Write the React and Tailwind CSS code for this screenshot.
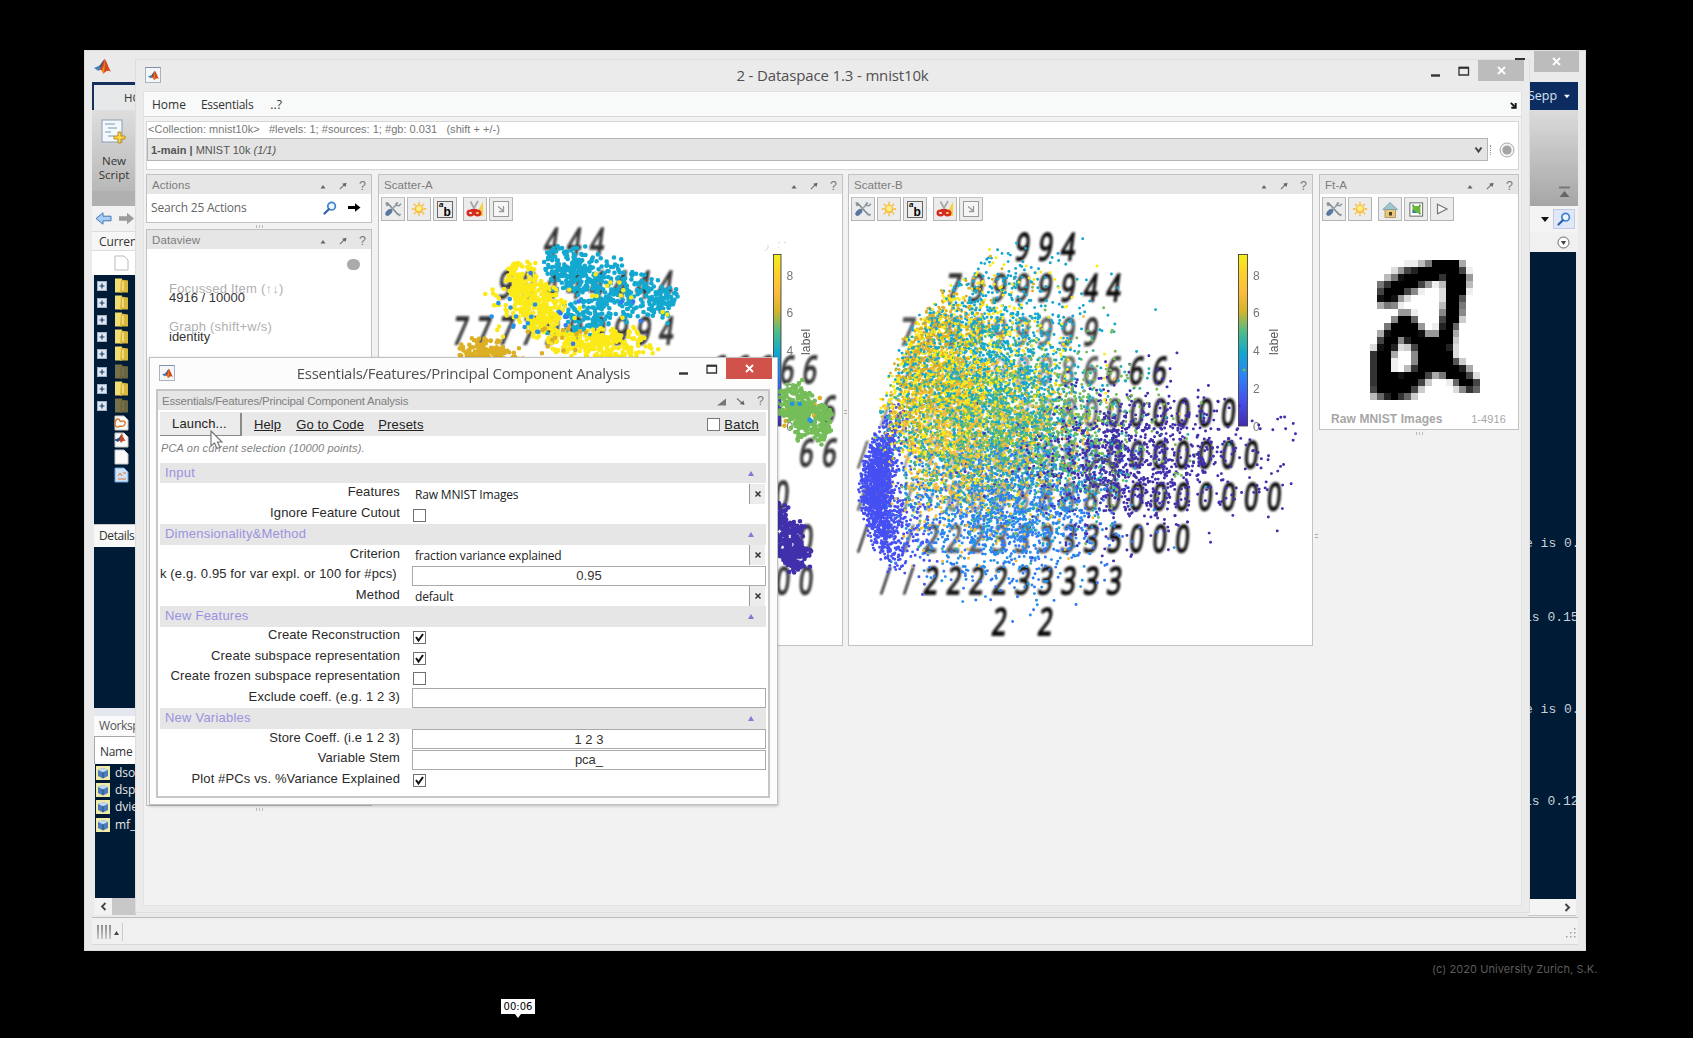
import React from "react";

const sans = "font-['Liberation_Sans',sans-serif]";
const ui = "font-['Open_Sans',sans-serif]";

/* ---------- seeded scatter data ---------- */
function makeRng(seed) {
  let a = seed;
  return () => {
    a = (a + 0x6d2b79f5) | 0;
    let t = Math.imul(a ^ (a >>> 15), 1 | a);
    t = (t + Math.imul(t ^ (t >>> 7), 61 | t)) ^ t;
    return ((t ^ (t >>> 14)) >>> 0) / 4294967296;
  };
}

const LABEL_COLORS = [
  "#4030ac", "#4650f2", "#3478f8", "#2492e8", "#12a8d0",
  "#30b0a8", "#74bd58", "#dcaf24", "#f3bd3c", "#fbea18",
];

const EDGE = [
  [230, 995], [262, 975], [270, 955], [290, 938], [310, 922], [340, 900],
  [370, 888], [400, 880], [430, 876], [450, 868], [470, 862], [500, 860],
  [540, 868], [560, 880], [575, 905], [590, 955], [640, 965],
];

function leftEdge(y) {
  for (let i = 1; i < EDGE.length; i++) {
    if (y <= EDGE[i][0]) {
      const [y0, x0] = EDGE[i - 1];
      const [y1, x1] = EDGE[i];
      return x0 + ((x1 - x0) * (y - y0)) / (y1 - y0);
    }
  }
  return 960;
}

const B_CLUSTERS = [
  { l: 0, n: 800, x: 1125, y: 458, sx: 52, sy: 32 },
  { l: 0, n: 350, x: 1160, y: 462, sx: 60, sy: 36 },
  { l: 2, n: 650, x: 1005, y: 515, sx: 52, sy: 38 },
  { l: 3, n: 850, x: 1000, y: 500, sx: 52, sy: 38 },
  { l: 5, n: 1100, x: 1000, y: 440, sx: 60, sy: 42 },
  { l: 6, n: 1250, x: 1010, y: 425, sx: 66, sy: 40 },
  { l: 8, n: 1300, x: 970, y: 440, sx: 52, sy: 44 },
  { l: 4, n: 1550, x: 978, y: 360, sx: 52, sy: 48 },
  { l: 7, n: 1150, x: 925, y: 352, sx: 34, sy: 44 },
  { l: 9, n: 1500, x: 950, y: 375, sx: 50, sy: 54 },
];

function scatterB() {
  const r = makeRng(7);
  const g = () => Math.sqrt(-2 * Math.log(r() + 1e-9)) * Math.cos(6.2832 * r());
  const pts = [];
  B_CLUSTERS.forEach((c) => {
    for (let i = 0; i < c.n; i++) {
      const x = c.x + g() * c.sx;
      const y = c.y + g() * c.sy;
      if (y < 232 || y > 634 || x > 1306 || x < leftEdge(y) + r() * 14) continue;
      if (y > 450 && y < 560 && x < 905 && r() < 0.6) continue;
      pts.push([x, y, c.l]);
    }
  });
  for (let i = 0; i < 1400; i++) {
    const y = 488 + g() * 33;
    const x = 876 + g() * 8.5 + Math.pow((y - 492) / 42, 2) * 6;
    if (y > 402 && y < 578 && x > leftEdge(y) - 2) pts.push([x, y, 1]);
  }
  for (let i = 0; i < 160; i++) pts.push([905 + g() * 16, 520 + g() * 30, 1]);
  for (let i = pts.length - 1; i > 0; i--) {
    const j = Math.floor(r() * (i + 1));
    [pts[i], pts[j]] = [pts[j], pts[i]];
  }
  return pts;
}

const A_BLOBS = [
  { l: 4, n: 85, x: 565, y: 263, rx: 23, ry: 17 },
  { l: 4, n: 75, x: 588, y: 274, rx: 22, ry: 22 },
  { l: 4, n: 65, x: 575, y: 280, rx: 26, ry: 13 },
  { l: 4, n: 75, x: 612, y: 284, rx: 25, ry: 20 },
  { l: 4, n: 100, x: 645, y: 300, rx: 30, ry: 24 },
  { l: 4, n: 40, x: 662, y: 301, rx: 15, ry: 12 },
  { l: 4, n: 80, x: 583, y: 313, rx: 24, ry: 15 },
  { l: 4, n: 40, x: 615, y: 306, rx: 24, ry: 18 },
  { l: 4, n: 16, x: 575, y: 330, rx: 30, ry: 8 },
  { l: 9, n: 100, x: 521, y: 282, rx: 18, ry: 20 },
  { l: 9, n: 160, x: 535, y: 302, rx: 25, ry: 20 },
  { l: 9, n: 95, x: 544, y: 323, rx: 16, ry: 14 },
  { l: 9, n: 115, x: 580, y: 343, rx: 28, ry: 13 },
  { l: 9, n: 175, x: 616, y: 345, rx: 32, ry: 17 },
  { l: 9, n: 32, x: 512, y: 306, rx: 24, ry: 30 },
  { l: 9, n: 18, x: 610, y: 300, rx: 60, ry: 38 },
  { l: 7, n: 70, x: 482, y: 348, rx: 22, ry: 10 },
  { l: 7, n: 60, x: 495, y: 355, rx: 28, ry: 8 },
  { l: 7, n: 16, x: 560, y: 340, rx: 40, ry: 16 },
  { l: 3, n: 14, x: 525, y: 315, rx: 34, ry: 25 },
  { l: 2, n: 9, x: 590, y: 300, rx: 80, ry: 46 },
  { l: 6, n: 130, x: 794, y: 402, rx: 19, ry: 18 },
  { l: 6, n: 155, x: 808, y: 418, rx: 20, ry: 18 },
  { l: 6, n: 60, x: 822, y: 425, rx: 9, ry: 16 },
  { l: 7, n: 8, x: 806, y: 412, rx: 24, ry: 24 },
  { l: 3, n: 5, x: 800, y: 420, rx: 26, ry: 30 },
  { l: 0, n: 100, x: 778, y: 522, rx: 10, ry: 22 },
  { l: 0, n: 150, x: 791, y: 543, rx: 14, ry: 22 },
  { l: 0, n: 100, x: 796, y: 556, rx: 14, ry: 15 },
  { l: 2, n: 5, x: 790, y: 530, rx: 16, ry: 30 },
];

function scatterA() {
  const r = makeRng(21);
  const pts = [];
  A_BLOBS.forEach((b) => {
    for (let i = 0; i < b.n; i++) {
      const a = r() * 6.2832;
      const wobble = 1 + 0.14 * Math.sin(a * 5 + b.x) + 0.1 * Math.sin(a * 9 + b.y);
      const d = Math.pow(r(), 0.5) * (0.88 + 0.3 * r()) * wobble;
      pts.push([b.x + Math.cos(a) * d * b.rx, b.y + Math.sin(a) * d * b.ry, b.l]);
    }
  });
  return pts;
}

/* Points are merged into one path per colour and batch, so layers interleave. */
function toPaths(pts, batch) {
  const out = [];
  for (let s = 0; s < pts.length; s += batch) {
    const by = {};
    pts.slice(s, s + batch).forEach(([x, y, l]) => {
      by[l] = (by[l] || "") + `M${x.toFixed(1)} ${y.toFixed(1)}h.1`;
    });
    Object.keys(by).forEach((l) => out.push({ l: +l, d: by[l] }));
  }
  return out;
}

/* The large label-4 cloud is drawn first, the rest above it. */
const PATHS_A = toPaths(scatterA(), 100000).sort((a, b) => (a.l === 4 ? -1 : b.l === 4 ? 1 : b.l - a.l));
const PATHS_B = toPaths(scatterB(), 300);

const DIGITS_B = [
  [1023, 247, "994"], [954, 288, "79999944"], [908, 332, "779999999"],
  [908, 371, "779998886666"], [886, 413, "1777988880000000"],
  [863, 455, "111778888800000000"], [863, 497, "1111888888800000000"],
  [863, 539, "111222333335000"], [886, 581, "11222233333"],
  [1000, 622, "2"], [1046, 622, "2"],
];

const DIGITS_A = [
  [552, 242, "444"], [506, 285, "99444444"], [461, 331, "7777999994"],
  [719, 370, "66666"], [829, 410, "6"], [807, 453, "66"],
  [783, 495, "0"], [807, 539, "0"], [784, 581, "00"],
];

function Digits({ rows, fade }) {
  return (
    <g className="font-['Open_Sans',sans-serif]" fontSize="36" filter="url(#ink)">
      {rows.map(([x, y, s]) =>
        s.split("").map((ch, i) => {
          const cx = x + i * 22.9;
          const dist = Math.hypot((cx - 985) / 150, (y - 425) / 150);
          const o = fade ? Math.max(0.3, Math.min(1, dist * 0.9)) : 0.85;
          const narrow = ch === "1";
          return (
            <text
              key={`${x}-${y}-${i}`}
              transform={`translate(${cx - 2} ${y + 13}) skewX(${ch === "0" ? -5 : -8}) scale(${narrow ? 0.55 : 0.68} 1.04)`}
              textAnchor="middle"
              fill="#0c0c0c"
              stroke="#0c0c0c"
              strokeWidth={narrow ? 1.2 : 1.8}
              opacity={o}
            >
              {narrow ? "/" : ch}
            </text>
          );
        })
      )}
    </g>
  );
}

function ColorBar({ x, w, tx, lx, id }) {
  return (
    <g className="font-['Liberation_Sans',sans-serif]">
      <defs>
        <linearGradient id={id} x1="0" y1="0" x2="0" y2="1">
          <stop offset="0" stopColor="#f6ee16" />
          <stop offset="0.12" stopColor="#fcce2e" />
          <stop offset="0.22" stopColor="#fcbc3c" />
          <stop offset="0.33" stopColor="#d5b52a" />
          <stop offset="0.45" stopColor="#4dbc88" />
          <stop offset="0.57" stopColor="#12a8cc" />
          <stop offset="0.7" stopColor="#2a86f6" />
          <stop offset="0.85" stopColor="#4552ee" />
          <stop offset="1" stopColor="#402db0" />
        </linearGradient>
      </defs>
      <rect x={x} y={254.5} width={w} height={171.5} fill={`url(#${id})`} stroke="#444" strokeWidth="0.9" />
      {[8, 6, 4, 2, 0].map((v, i) => (
        <text key={v} x={tx} y={279.5 + i * 37.9} fontSize="12" fill="#777">{v}</text>
      ))}
      <text transform={`translate(${lx} 355) rotate(-90)`} fontSize="12" letterSpacing="0.2" fill="#555">label</text>
    </g>
  );
}

function PlotA() {
  return (
    <svg width="463" height="421" viewBox="379 224 463 421" className="block">
      <defs>
        <filter id="ink" x="-5%" y="-5%" width="110%" height="110%">
          <feGaussianBlur stdDeviation="0.8" />
        </filter>
      </defs>
      <Digits rows={DIGITS_A} />
      <ColorBar x={773.5} w={7.5} tx={786.5} lx={810} id="barA" />
      {PATHS_A.map((p, i) => (
        <path key={i} d={p.d} stroke={LABEL_COLORS[p.l]} strokeWidth="4.5" strokeLinecap="round" fill="none" />
      ))}
      <path d="M765 251l3-3v-3M778 243l2-1m4 0l2 1m-8 4l1 1" stroke="#d8d8c0" strokeWidth="1" fill="none" />
    </svg>
  );
}

function PlotB() {
  return (
    <svg width="463" height="421" viewBox="849 224 463 421" className="block">
      <Digits rows={DIGITS_B} fade />
      <ColorBar x={1238.5} w={9} tx={1253} lx={1277.5} id="barB" />
      {PATHS_B.map((p, i) => (
        <path key={i} d={p.d} stroke={LABEL_COLORS[p.l]} strokeWidth="2.9" strokeLinecap="round" fill="none" />
      ))}
      <circle cx="1102.5" cy="472" r="13" fill="none" stroke="#566060" strokeOpacity="0.75" strokeWidth="2" />
    </svg>
  );
}

/* 16 × 20 grey levels, one hex digit per pixel */
const TWO = [
  "000001148ffff500", "00026bdffffffb10", "0048efffffcfff60", "08cffffb614fff40",
  "0bfffb71002fff10", "0efe6200002ffa00", "05871000004ff800", "00006610007ff700",
  "0007ff9000bff300", "008ffff601df9000", "05effffe66ff5000", "0bff7dffffff3000",
  "2efd23bffffd2000", "cff5007fffff2000", "cff1007fffffa300", "cff104cffffffd50",
  "cfffefffb58fffb2", "cffffffb30019ffb", "bfffffb3000027c9", "49dfc93000000000",
];

function RasterTwo() {
  return (
    <svg width="110" height="140" viewBox="0 0 16 20" preserveAspectRatio="none" shapeRendering="crispEdges">
      {TWO.map((row, y) =>
        row.split("").map((c, x) => {
          const v = 255 - parseInt(c, 16) * 17;
          return c === "0" ? null : <rect key={`${x}.${y}`} x={x} y={y} width="1" height="1" fill={`rgb(${v},${v},${v})`} />;
        })
      )}
    </svg>
  );
}

/* ---------- icons ---------- */
function MatlabMark({ size }) {
  return (
    <svg width={size} height={size} viewBox="0 0 16 16">
      <path d="M0 9.5L4.5 7.5 7 10 4 12z" fill="#3d7fb8" />
      <path d="M4.5 7.5C6.5 7 7.5 3 10 1L7 10z" fill="#35507a" />
      <path d="M10 1C12 3 13.500 9 16 13 13.500 11 11 12 9 15 8 12 7 10.500 5 11.500 7.500 9 8.500 3 10 1z" fill="#d2481c" />
      <path d="M10 1C9.500 5 9.500 9 7 12L9 15C10 12 10.500 6 10 1z" fill="#f08a24" />
    </svg>
  );
}

function AppIcon() {
  return (
    <span className="flex h-4 w-4 items-center justify-center border border-[#a9b3bd] border-t-[#7d93ad] bg-[#f4f6f8]">
      <MatlabMark size={11} />
    </span>
  );
}

function ToolsIcon() {
  return (
    <svg width="18" height="18" viewBox="0 0 18 18" fill="none">
      <path d="M3 2.500L14.500 15" stroke="#7e8890" strokeWidth="1.600" />
      <path d="M14 2.500L7 10.500" stroke="#9aa4ac" strokeWidth="1.800" />
      <path d="M12.500 2.500l-.5 3 3 .3 2-2M2 2.500l1 3 2-1M13 13l2.500 2.500 1-1.500" stroke="#8a949c" strokeWidth="1.400" />
      <path d="M7.500 9.500C9 11 7 14.500 4 15.500c-2 .5-3-1-2-3C3 10 6 8.500 7.500 9.500z" fill="#5878a4" stroke="#48648c" strokeWidth=".6" />
    </svg>
  );
}

function SunIcon() {
  return (
    <svg width="16" height="16" viewBox="0 0 16 16">
      <g stroke="#f6c45c" strokeWidth="1.800" strokeLinecap="round">
        <path d="M8 1.500v1.200M8 13.300v1.200M1.500 8h1.200M13.300 8h1.200M3.400 3.400l.8.8M11.800 11.800l.8.8M3.400 12.600l.8-.8M11.800 4.200l.8-.8" />
      </g>
      <circle cx="8" cy="8" r="4.400" fill="#f9bc3a" />
      <circle cx="8" cy="7.500" r="2.800" fill="#fff08a" />
    </svg>
  );
}

function AbIcon() {
  return (
    <span className={`flex h-[17px] w-[16px] items-start justify-center border border-[#666] bg-[#ececec] font-bold leading-none text-black ${sans}`}>
      <span className="-mt-px text-[8px] italic">a</span>
      <span className="mt-[4px] text-[12px]">b</span>
    </span>
  );
}

function ScissorsIcon() {
  return (
    <svg width="18" height="18" viewBox="0 0 18 18" fill="none">
      <path d="M17 1.500V16H9z" fill="#f6d040" />
      <path d="M4.500 1.500L9 10M12 1L7 10" stroke="#a8a8a8" strokeWidth="1.800" />
      <ellipse cx="4.500" cy="13" rx="2.800" ry="2.200" stroke="#d42a20" strokeWidth="2.400" />
      <ellipse cx="11.500" cy="13" rx="2.800" ry="2.200" stroke="#d42a20" strokeWidth="2.400" />
      <path d="M5 10.300h6" stroke="#d42a20" strokeWidth="2.600" />
    </svg>
  );
}

function CornerIcon() {
  return (
    <svg width="18" height="18" viewBox="0 0 18 18" fill="none">
      <rect x="1.500" y="1.500" width="15" height="15" fill="#f6f6f6" stroke="#9a9a9a" />
      <path d="M6 6.500l5 4M11.500 6v5.500H7" stroke="#999" strokeWidth="1.300" />
    </svg>
  );
}

function HouseIcon() {
  return (
    <svg width="16" height="17" viewBox="0 0 16 17">
      <rect x="3" y="8" width="10.500" height="8.500" fill="#e6c87c" stroke="#a98a50" strokeWidth=".8" />
      <path d="M8 1.500L15.500 8.500H.8z" fill="#9cc6cc" stroke="#7a9aa4" strokeWidth=".8" />
      <rect x="7" y="11" width="3" height="3.500" fill="#4c4020" />
    </svg>
  );
}

function FrameIcon() {
  return (
    <svg width="15" height="17" viewBox="0 0 17 18">
      <rect x="1" y="1.500" width="14.500" height="15" fill="#fff" stroke="#555" />
      <rect x="4" y="5" width="9" height="8" fill="#6cb63c" />
      <path d="M4 9l5 4H4z" fill="#3c78b8" />
      <path d="M4 3.500l1.500 1.500M13 3.500l-1.500 1.500M13 14.500l-1.500-1.500" stroke="#3c8c28" strokeWidth="1.600" />
    </svg>
  );
}

function PlayIcon() {
  return (
    <svg width="14" height="14" viewBox="0 0 14 14">
      <path d="M2.500 2.200L12 7l-9.500 4.800z" fill="#fafafa" stroke="#777" strokeWidth="1.200" />
    </svg>
  );
}

function Magnifier({ size }) {
  return (
    <svg width={size} height={size} viewBox="0 0 14 14" fill="none">
      <circle cx="8.600" cy="5.200" r="3.800" stroke="#3f80d0" strokeWidth="1.700" fill="#eaf5fc" />
      <path d="M5.800 8.200L1.500 12.500" stroke="#2f62b0" strokeWidth="2.200" strokeLinecap="round" />
    </svg>
  );
}

function ToolButton({ children }) {
  return (
    <span className="flex h-6 w-6 items-center justify-center border border-[#b4b4b4] border-t-[#c4c4c4] bg-[#ececec]">
      {children}
    </span>
  );
}

/* ---------- dock panels ---------- */
function PanelControls() {
  return (
    <span className="flex items-center text-[#777]">
      <svg width="6" height="4" viewBox="0 0 6 4" className="mt-px"><path d="M3 0l2.500 3.500h-5z" fill="#666" /></svg>
      <svg width="8" height="8" viewBox="0 0 9 9" className="ml-[13px]" fill="none">
        <path d="M1 8L6.500 2.500" stroke="#777" strokeWidth="1.300" />
        <path d="M3.500 2L8.500 .8 7.300 5.500z" fill="#666" />
      </svg>
      <span className="ml-[12px] w-2 text-[12.5px] leading-none">?</span>
    </span>
  );
}

function Panel({ title, className, children }) {
  return (
    <section className={`flex flex-col border border-[#c2c2c2] bg-white ${className}`}>
      <header className={`flex h-[19px] shrink-0 items-center justify-between bg-[#e6e6e6] pl-[5px] pr-[4px] pt-[3px] text-[11.5px] tracking-[0.1px] text-[#7c7c7c] ${sans}`}>
        <span>{title}</span>
        <PanelControls />
      </header>
      {children}
    </section>
  );
}

function PlotToolbar({ children }) {
  return <div className="flex h-[30px] shrink-0 items-start gap-[2px] pl-[2px] pt-[3px]">{children}</div>;
}

function ScatterPanel({ title, children }) {
  return (
    <Panel title={title} className="h-[472px] w-[465px]">
      <PlotToolbar>
        <ToolButton><ToolsIcon /></ToolButton>
        <ToolButton><SunIcon /></ToolButton>
        <ToolButton><AbIcon /></ToolButton>
        <span className="w-[2px]" />
        <ToolButton><ScissorsIcon /></ToolButton>
        <ToolButton><CornerIcon /></ToolButton>
      </PlotToolbar>
      {children}
    </Panel>
  );
}

function Grip() {
  return <div className="flex h-[7px] items-center justify-center gap-[2px]">{[0, 1, 2].map((i) => <i key={i} className="h-[3px] w-px bg-[#bbb]" />)}</div>;
}

/* ---------- MATLAB desktop behind ---------- */
function TreeRow({ kind }) {
  if (kind === "folder" || kind === "dim") {
    return (
      <div className="flex h-[17.2px] items-center gap-[8px] pl-[3px]">
        <svg width="10" height="10" viewBox="0 0 10 10" className="shrink-0">
          <rect x=".5" y=".5" width="9" height="9" fill="#dfe8f2" stroke="#9fb2c8" />
          <path d="M2.500 5h5M5 2.500v5" stroke="#1c3a68" strokeWidth="1.200" />
        </svg>
        <svg width="14" height="16" viewBox="0 0 14 15">
          <path d="M0 0h7v14H0z" fill={kind === "dim" ? "#77714a" : "#f2dc74"} />
          <path d="M6 1l7 1v12H5z" fill={kind === "dim" ? "#68643f" : "#d8b83c"} />
          <path d="M8 3v9" stroke={kind === "dim" ? "#7c7850" : "#fbeea0"} strokeWidth="1.200" />
        </svg>
      </div>
    );
  }
  return (
    <div className="flex h-[17.2px] items-center pl-[20px]">
      <svg width="15" height="16" viewBox="0 0 15 16">
        <path d="M1 1h9l4 4v10H1z" fill={kind === "img" ? "#cfe2f6" : "#fafafa"} stroke={kind === "img" ? "#6ea4dc" : "#c8c8c8"} />
        {kind === "fig" && <path d="M1 9C1 4 5 2 6 6c1 2 3-2 5 1 1 3-2 5-5 4-2 2-5 1-5-2z" fill="none" stroke="#dc7a30" strokeWidth="1.500" />}
        {kind === "m" && <path d="M0 8l5-2 3-5c1 4 2 6 4 8-3-1-4 1-5 2-1-3-3-3-7-3z" fill="#cc4a28" />}
        {kind === "m" && <path d="M0 8l5-2 2-3-1 5-2 2z" fill="#30508c" />}
        {kind === "img" && <path d="M4 9l2-3 2 3M9 6h3M4 12h8" stroke="#e0763a" fill="none" />}
      </svg>
    </div>
  );
}

const TREE = ["folder", "folder", "folder", "folder", "folder", "dim", "folder", "dim", "fig", "m", "doc", "img"];

function LeftRail() {
  return (
    <div className={`flex w-[44px] shrink-0 flex-col overflow-hidden whitespace-nowrap text-[12px] text-[#333] ${ui}`}>
      <div className="h-[28px] border-l-2 border-t-[3px] border-[#15305c] bg-[#e6e8ea] pl-[30px] pt-[3px] text-[11.5px] leading-5">HOME</div>
      <div className="flex h-[81px] flex-col items-center bg-gradient-to-b from-[#dedede] to-[#b8b8b8] pt-[9px] leading-[14px]">
        <svg width="26" height="26" viewBox="0 0 26 26">
          <rect x="1" y="1" width="20" height="22" fill="#f2f8fc" stroke="#8aa0b4" />
          <path d="M4 5h10M7 9h9M4 13h6M7 17h6" stroke="#7c98b0" />
          <path d="M17 13h3v4h4v3h-4v4h-3v-4h-4v-3h4z" fill="#fbd54a" stroke="#b88c20" />
        </svg>
        <span className="mt-[9px] text-[11.5px]">New</span>
        <span className="text-[11.5px]">Script</span>
      </div>
      <div className="h-[15px] bg-[#b0b0b0]" />
      <div className="flex h-[25px] items-center gap-[6px] bg-[#f2f2f2] pl-[3px]">
        <svg width="17" height="13" viewBox="0 0 17 13"><path d="M1 6.500L8 .8v3.400h8v4.600H8v3.400z" fill="#a8cdf2" stroke="#4478b4" /></svg>
        <svg width="17" height="13" viewBox="0 0 17 13"><path d="M16 6.500L9 .8v3.400H1v4.600h8v3.400z" fill="#9c9c9c" /></svg>
      </div>
      <div className="h-[20px] border-y border-[#dcdcdc] bg-[#f6f6f6] pl-[7px] leading-[19px] tracking-[-0.1px]">Current</div>
      <div className="flex h-[24px] items-center bg-white pl-[22px]">
        <svg width="15" height="16" viewBox="0 0 15 16"><path d="M1 1h9l4 4v10H1z" fill="#fff" stroke="#bbb" /></svg>
      </div>
      <div className="ml-[2px] flex h-[249px] flex-col bg-[#001b36] pt-[2px]">
        {TREE.map((k, i) => <TreeRow key={i} kind={k} />)}
      </div>
      <div className="ml-[2px] h-[23px] border-t border-[#c8c8c8] bg-[#f8f8f8] pl-[5px] text-[12px] leading-[22px] tracking-[-0.4px]">Details</div>
      <div className="ml-[2px] h-[161px] bg-[#001b36]" />
      <div className="ml-[2px] h-[8px] bg-[#e4e8ee]" />
      <div className="ml-[2px] h-[20px] bg-[#fafafa] pl-[5px] leading-[20px] tracking-[-0.4px] text-[#555]">Workspace</div>
      <div className="ml-[2px] h-[28px] border-l border-t border-[#aaa] bg-white pl-[5px] text-[12px] leading-[30px] tracking-[-0.3px]">Name</div>
      <div className="ml-[3px] h-[134px] bg-[#001b36]">
        {["dso", "dsp", "dvie", "mf_"].map((n) => (
          <div key={n} className="flex h-[17.3px] items-center gap-[5px] pl-[1px] text-[#e8e8e8]">
            <svg width="14" height="14" viewBox="0 0 14 14" className="shrink-0">
              <rect width="14" height="14" fill="#f0eaa8" />
              <path d="M2 4L7 2l5 2v6L7 12.500 2 10z" fill="#4c7cbc" />
              <path d="M2 4L7 6.200 12 4 7 2z" fill="#c0dcf4" />
              <path d="M7 6.500V12" stroke="#284c84" />
            </svg>
            <span>{n}</span>
          </div>
        ))}
      </div>
      <div className="ml-[2px] flex h-[17px] bg-[#c8c8c8]">
        <span className="flex w-[18px] items-center justify-center bg-[#f2f2f2]">
          <svg width="7" height="9" viewBox="0 0 7 9"><path d="M5.500 1L2 4.500 5.500 8" stroke="#444" strokeWidth="1.800" fill="none" /></svg>
        </span>
      </div>
    </div>
  );
}

function ConsoleLine({ gap, children }) {
  return (
    <>
      <span className={gap} />
      <span className="flex h-[14px] justify-start">{children}</span>
    </>
  );
}

function RightRail() {
  return (
    <div className="flex w-[50px] shrink-0 flex-col overflow-hidden">
      <div className={`flex h-[28px] items-center justify-end gap-[7px] bg-[#0c2b60] pr-[8px] text-[12.5px] text-[#d8e2f0] ${ui}`}>
        <span>Sepp</span>
        <svg width="8" height="5" viewBox="0 0 8 5"><path d="M0 0h8L4 5z" fill="#fff" /></svg>
      </div>
      <div className="flex h-[96px] items-end justify-end bg-gradient-to-b from-[#dcdcdc] to-[#a6a6a6] pb-[8px] pr-[8px]">
        <svg width="11" height="12" viewBox="0 0 11 12"><path d="M0 1.500h11" stroke="#777" strokeWidth="2" /><path d="M5.500 5L10.500 11H.5z" fill="#666" /></svg>
      </div>
      <div className="flex h-[26px] items-center justify-end bg-[#f4f4f4]">
        <svg width="8" height="5" viewBox="0 0 8 5" className="mr-[4px]"><path d="M0 0h8L4 5z" fill="#111" /></svg>
        <span className="mr-[3px] flex h-[20px] w-[22px] items-center justify-center border border-[#c0cce4] bg-[#e0e8f8]"><Magnifier size={14} /></span>
      </div>
      <div className="flex h-[20px] items-center justify-end bg-[#f0f0f0] pr-[8px]">
        <svg width="13" height="13" viewBox="0 0 13 13"><circle cx="6.500" cy="6.500" r="5.500" fill="#fff" stroke="#666" /><path d="M3.800 5h5.400L6.500 9z" fill="#444" /></svg>
      </div>
      <div className="mr-[2px] flex h-[647px] flex-col overflow-hidden whitespace-pre bg-[#001b36] font-['Liberation_Mono',monospace] text-[13px] leading-[14px] text-[#c8d0d8]">
        <ConsoleLine gap="h-[285px]"><span className="-ml-[3px]">e is 0.</span></ConsoleLine>
        <ConsoleLine gap="h-[60px]"><span className="-ml-[4px]">is 0.15</span></ConsoleLine>
        <ConsoleLine gap="h-[78px]"><span className="-ml-[3px]">e is 0.</span></ConsoleLine>
        <ConsoleLine gap="h-[78px]"><span className="-ml-[4px]">is 0.12</span></ConsoleLine>
      </div>
      <div className="mr-[2px] flex h-[17px] items-center justify-end border-b border-[#c8c8c8] bg-[#f4f4f4] pr-[5px]">
        <svg width="7" height="9" viewBox="0 0 7 9"><path d="M1.500 1L5 4.500 1.500 8" stroke="#444" strokeWidth="2" fill="none" /></svg>
      </div>
    </div>
  );
}

function BackWindow() {
  return (
    <div className="absolute left-[84px] top-[50px] flex h-[901px] w-[1502px] flex-col border border-[#dcdcdc] bg-[#eaeaea]">
      <div className="flex h-[31px] items-start justify-between pl-[9px] pr-[6px]">
        <span className="pt-[7px]"><MatlabMark size={17} /></span>
        <span className="flex h-[21px] w-[45px] items-center justify-center bg-[#bcbcbc]">
          <svg width="9" height="9" viewBox="0 0 9 9"><path d="M1 1l7 7M8 1L1 8" stroke="#fff" strokeWidth="1.800" /></svg>
        </span>
      </div>
      <div className="flex h-[835px] justify-between pl-[7px] pr-[7px]">
        <LeftRail />
        <RightRail />
      </div>
      <div className="mx-[7px] flex h-[28px] items-center justify-between border-b border-t border-b-[#d8d8d8] border-t-[#bcbcbc] bg-[#f0f0f0] pl-[5px] pr-[2px] pt-[2px]">
        <span className="flex items-center gap-[2px]">
          {[0, 1, 2, 3].map((i) => <i key={i} className="h-[14px] w-[2px] bg-gradient-to-b from-[#8c8c8c] to-[#c8c8c8]" />)}
          <svg width="5" height="4" viewBox="0 0 5 4" className="ml-px mt-[2px]"><path d="M2.500 0L5 4H0z" fill="#444" /></svg>
          <i className="ml-px h-[18px] w-px bg-[#ccc]" />
        </span>
        <svg width="11" height="11" viewBox="0 0 11 11" fill="#a0a0a0">
          <path d="M9 1h1.500v1.500H9zM5 5h1.500v1.500H5zM9 5h1.500v1.500H9zM1 9h1.500v1.500H1zM5 9h1.500v1.500H5zM9 9h1.500v1.500H9z" />
        </svg>
      </div>
    </div>
  );
}

/* ---------- Dataspace window ---------- */
function WindowButtons({ close }) {
  return (
    <div className="flex items-start">
      <svg width="10" height="3" viewBox="0 0 10 3" className="mt-[14px]"><path d="M0 1.500h9" stroke="#333" strokeWidth="2.400" /></svg>
      <svg width="12" height="11" viewBox="0 0 12 11" className="ml-[17px] mt-[6px]"><path d="M1 1.500h9.500v7.500H1z" fill="none" stroke="#333" strokeWidth="1.300" /><path d="M1 1.800h9.500" stroke="#333" strokeWidth="2" /></svg>
      <span className={`ml-[8px] flex h-[21px] w-[46px] items-center justify-center ${close}`}>
        <svg width="9" height="9" viewBox="0 0 9 9"><path d="M1 1l7 7M8 1L1 8" stroke="#fff" strokeWidth="1.800" /></svg>
      </span>
    </div>
  );
}

function MainWindow() {
  return (
    <div className="absolute left-[135px] top-[59px] flex h-[854px] w-[1395px] flex-col border border-[#dedede] bg-[#ebebeb]">
      <div className="flex h-[31px] items-start justify-between pl-[9px] pr-[5px]">
        <span className="mt-[7px] w-[89px]"><AppIcon /></span>
        <span className={`mt-[5px] text-[15px] leading-[20px] tracking-[-0.15px] text-[#505050] ${ui}`}>2 - Dataspace 1.3 - mnist10k</span>
        <WindowButtons close="bg-[#bcbcbc]" />
      </div>
      <main className="mx-[7px] flex h-[815px] flex-col border border-[#e2e2e2] bg-[#f2f2f2]">
        <nav className={`flex h-[25px] shrink-0 items-center border-b border-[#d8d8d8] bg-[#f8f9f9] pl-[8px] pr-[4px] pt-[2px] text-[12px] text-[#333] ${ui}`}>
          <span>Home</span>
          <span className="ml-[15px] tracking-[-0.25px]">Essentials</span>
          <span className="ml-[17px]">..?</span>
          <svg width="7" height="7" viewBox="0 0 8 8" className="ml-auto"><path d="M1 1l4 4M6.500 1v5.500H1.500" stroke="#111" strokeWidth="2.200" fill="none" /></svg>
        </nav>
        <div className={`mx-[2px] mt-[4px] flex h-[49px] shrink-0 flex-col border border-[#d6d6d6] bg-white text-[11px] text-[#777] ${sans}`}>
          <div className="h-[16px] whitespace-pre pl-px leading-[14px] tracking-[0.02px]">{"<Collection: mnist10k>   #levels: 1; #sources: 1; #gb: 0.031   (shift + +/-)"}</div>
          <div className="flex items-center">
            <div className="flex h-[23px] w-[1341px] items-center justify-between border border-[#b4b4b4] bg-[#e4e4e4] pl-[3px] pr-[4px] pt-px text-[#555]">
              <span><b>1-main |</b> MNIST 10k <i>(1/1)</i></span>
              <svg width="9" height="8" viewBox="0 0 9 8"><path d="M1.500 1.500l3 4 3-4" stroke="#444" strokeWidth="2" fill="none" /></svg>
            </div>
            <i className="ml-[2px] h-[10px] w-[2px] border-l border-dotted border-[#999]" />
            <svg width="16" height="16" viewBox="0 0 16 16" className="ml-[7px]"><circle cx="8" cy="8" r="7" fill="#f4f4f4" stroke="#aaa" /><circle cx="8" cy="8" r="4.600" fill="#a4a4a4" /></svg>
          </div>
        </div>
        <div className="mt-[4px] flex items-start pl-[2px]">
          <div className="w-[226px]">
            <Panel title="Actions" className="h-[49px]">
              <div className={`flex flex-1 items-center pb-px pl-[4px] pr-[10px] text-[12px] tracking-[-0.2px] text-[#666] ${ui}`}>
                <span>Search 25 Actions</span>
                <span className="ml-auto"><Magnifier size={14} /></span>
                <svg width="13" height="9" viewBox="0 0 13 9" className="ml-[11px]"><path d="M0 3h7V.3l5.500 4.200L7 8.700V6H0z" fill="#000" /></svg>
              </div>
            </Panel>
            <Grip />
            <Panel title="Dataview" className="-mt-px h-[577px]">
              <div className="flex justify-end pr-[11px] pt-[10px]">
                <span className="h-[11px] w-[13px] rounded-full bg-[#aaa]" />
              </div>
              <dl className={`mt-[14px] pl-[22px] text-[13px] leading-[9px] ${sans}`}>
                <dt className="tracking-[0.22px] text-[#b0b0b0]">Focussed Item (↑↓)</dt>
                <dd className="text-[#333]">4916 / 10000</dd>
                <dt className="mt-[20px] tracking-[0.22px] text-[#b0b0b0]">Graph (shift+w/s)</dt>
                <dd className="mt-px text-[#333]">identity</dd>
              </dl>
            </Panel>
            <Grip />
          </div>
          <div className="ml-[6px]">
            <ScatterPanel title="Scatter-A"><PlotA /></ScatterPanel>
          </div>
          <div className="flex w-[5px] flex-col items-center pt-[236px]">
            <i className="h-px w-[3px] bg-[#aaa]" /><i className="mt-[2px] h-px w-[3px] bg-[#aaa]" />
          </div>
          <div>
            <ScatterPanel title="Scatter-B"><PlotB /></ScatterPanel>
          </div>
          <div className="flex w-[6px] flex-col items-center pt-[360px]">
            <i className="h-px w-[3px] bg-[#aaa]" /><i className="mt-[2px] h-px w-[3px] bg-[#aaa]" />
          </div>
          <div>
            <Panel title="Ft-A" className="h-[256px] w-[200px]">
              <PlotToolbar>
                <ToolButton><ToolsIcon /></ToolButton>
                <ToolButton><SunIcon /></ToolButton>
                <span className="w-[2px]" />
                <ToolButton><HouseIcon /></ToolButton>
                <ToolButton><FrameIcon /></ToolButton>
                <ToolButton><PlayIcon /></ToolButton>
              </PlotToolbar>
              <div className="ml-[50px] mt-[36px] h-[140px]"><RasterTwo /></div>
              <div className={`mt-[10px] flex items-center justify-between pl-[11px] pr-[12px] text-[#a6a6a6] ${sans}`}>
                <b className="text-[12px] tracking-[0.1px]">Raw MNIST Images</b>
                <span className="text-[11px] tracking-[0.1px]">1-4916</span>
              </div>
            </Panel>
            <Grip />
          </div>
        </div>
      </main>
    </div>
  );
}

/* ---------- PCA dialog ---------- */
const UP = (
  <svg width="6" height="5" viewBox="0 0 6 5"><path d="M3 0l3 5H0z" fill="#8478d0" /></svg>
);

function Section({ children }) {
  return (
    <div className="flex h-[20.450px] items-center justify-between bg-[#e6e6e6] pl-[5px] pr-[12px] text-[13px] tracking-[0.22px] text-[#9a92e0]">
      <span className="-mt-px">{children}</span>
      {UP}
    </div>
  );
}

function Row({ label, shift, children }) {
  return (
    <div className="flex h-[20.450px] items-center whitespace-nowrap text-[13px]">
      <span className={`w-[240px] pb-[3px] text-right tracking-[0.13px] text-[#2a2a2a] ${shift || ""}`}>{label}</span>
      <div className="ml-[12px] flex h-full flex-1 items-center">{children}</div>
    </div>
  );
}

function Check({ on }) {
  return (
    <span className="ml-px mt-[2px] flex h-[13px] w-[13px] items-center justify-center border border-[#707070] bg-white">
      {on && <svg width="11" height="11" viewBox="0 0 11 11"><path d="M2 5l2.500 3.500L9 2" stroke="#111" strokeWidth="2" fill="none" /></svg>}
    </span>
  );
}

function Combo({ children }) {
  return (
    <>
      <span className={`flex-1 pl-[3px] pt-[2px] text-[12px] tracking-[-0.17px] text-[#222] ${ui}`}>{children}</span>
      <span className="mr-[1px] flex h-[20px] w-[16px] items-center justify-center self-end border-l border-[#999] bg-[#ececec]">
        <svg width="8" height="8" viewBox="0 0 8 8"><path d="M1.500 1.500l5 5M6.500 1.500l-5 5" stroke="#333" strokeWidth="1.500" /></svg>
      </span>
    </>
  );
}

function Input({ children }) {
  return <span className="flex h-[20px] flex-1 items-center justify-center self-end border border-[#aaa] bg-white pt-px text-[13px] text-[#333]">{children}</span>;
}

function Dialog() {
  return (
    <div className="absolute left-[149px] top-[357px] flex h-[448px] w-[629px] flex-col border border-[#c0c0c0] bg-[#fcfcfc] shadow-[0_1px_3px_rgba(0,0,0,0.25)]">
      <div className="flex h-[31px] items-start justify-between pl-[9px] pr-[5px]">
        <span className="mt-[7px] w-[89px]"><AppIcon /></span>
        <span className={`mt-[5px] text-[15px] leading-[20px] tracking-[-0.3px] text-[#505050] ${ui}`}>Essentials/Features/Principal Component Analysis</span>
        <WindowButtons close="bg-[#d0524a]" />
      </div>
      <div className={`ml-[6px] mr-[7px] flex h-[409px] flex-col border-2 border-[#c6c6c6] bg-white px-[2px] ${sans}`}>
        <div className="-mx-[2px] flex h-[19px] items-center justify-between bg-[#e6e6e6] pl-[4px] pr-[4px] pt-[2px] text-[11.500px] text-[#808080]">
          <span className="tracking-[-0.21px]">Essentials/Features/Principal Component Analysis</span>
          <span className="flex items-center text-[#777]">
            <svg width="9" height="8" viewBox="0 0 10 8"><path d="M10 0v8H0z" fill="#777" /></svg>
            <svg width="9" height="9" viewBox="0 0 9 9" className="ml-[10px]" fill="none"><path d="M1 1.500l5 4.500" stroke="#777" strokeWidth="1.300" /><path d="M8.500 8L3.800 7 7.500 3.500z" fill="#666" /></svg>
            <span className="ml-[12px] text-[12.500px] leading-none">?</span>
          </span>
        </div>
        <div className="mt-[2px] flex h-[24px] shrink-0 items-center bg-[#e8e8e8] text-[13px] text-[#222]">
          <span className="flex h-[23px] w-[82px] items-center border-b border-r-2 border-[#8a8a8a] bg-[#ececec] pl-[12px] tracking-[0.15px]">Launch...</span>
          <span className="ml-[12px] pt-px tracking-[0.1px] underline">Help</span>
          <span className="ml-[15px] pt-px tracking-[0.15px] underline">Go to Code</span>
          <span className="ml-[14px] pt-px tracking-[0.2px] underline">Presets</span>
          <span className="ml-auto h-[13px] w-[13px] border border-[#777] bg-white" />
          <span className="ml-[4px] mr-[7px] pt-px tracking-[0.3px] underline">Batch</span>
        </div>
        <div className="h-[27px] shrink-0 pl-[1px] text-[11px] italic leading-[25px] tracking-[0.15px] text-[#808080]">PCA on current selection (10000 points).</div>
        <div className="flex flex-col">
          <Section>Input</Section>
          <Row label="Features"><Combo>Raw MNIST Images</Combo></Row>
          <Row label="Ignore Feature Cutout"><Check /></Row>
          <Section>Dimensionality&amp;Method</Section>
          <Row label="Criterion"><Combo>fraction variance explained</Combo></Row>
          <Row label="k (e.g. 0.95 for var expl. or 100 for #pcs)" shift="pr-[4px]"><Input>0.95</Input></Row>
          <Row label="Method"><Combo>default</Combo></Row>
          <Section>New Features</Section>
          <Row label="Create Reconstruction"><Check on /></Row>
          <Row label="Create subspace representation"><Check on /></Row>
          <Row label="Create frozen subspace representation"><Check /></Row>
          <Row label="Exclude coeff. (e.g. 1 2 3)"><Input /></Row>
          <Section>New Variables</Section>
          <Row label="Store Coeff. (i.e 1 2 3)"><Input>1 2 3</Input></Row>
          <Row label="Variable Stem"><Input>pca_</Input></Row>
          <Row label="Plot #PCs vs. %Variance Explained"><Check on /></Row>
        </div>
      </div>
    </div>
  );
}

export default function App() {
  return (
    <div className="relative h-[1038px] w-[1693px] overflow-hidden bg-black">
      <BackWindow />
      <MainWindow />
      <i className="absolute left-[1515px] top-[58px] h-[2px] w-[10px] bg-[#333]" />
      <Dialog />
      <svg width="14" height="20" viewBox="0 0 14 20" className="absolute left-[210px] top-[430px]">
        <path d="M1 1v15l3.500-3 2.500 5.500 3-1.300L7.500 12H12z" fill="#fff" stroke="#777" strokeWidth="1.200" />
      </svg>
      <div className="absolute left-[1432px] top-[961px] whitespace-nowrap font-['Inter',sans-serif] text-[11px] leading-[16px] tracking-[0.07px] text-[#5c5c5c]">(c) 2020 University Zurich, S.K.</div>
      <div className="absolute left-[501px] top-[999px] flex w-[34px] flex-col items-center">
        <span className="h-[15px] w-full bg-white text-center font-['DejaVu_Sans',sans-serif] text-[10px] leading-[15px] text-black">00:06</span>
        <svg width="6" height="4" viewBox="0 0 6 4"><path d="M0 0h6L3 4z" fill="#fff" /></svg>
      </div>
    </div>
  );
}
